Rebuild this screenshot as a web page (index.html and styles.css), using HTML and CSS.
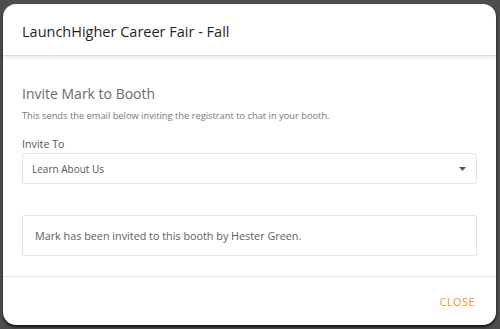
FILE: index.html
```html
<!DOCTYPE html>
<html>
<head>
<meta charset="utf-8">
<link rel="stylesheet" href="styles.css">
</head>
<body>
<div class="backdrop">
  <div class="dialog">
    <div class="header">LaunchHigher Career Fair - Fall</div>
    <div class="body">
      <h2 class="heading">Invite Mark to Booth</h2>
      <p class="sub">This sends the email below inviting the registrant to chat in your booth.</p>
      <label class="label">Invite To</label>
      <div class="select">
        <span>Learn About Us</span>
        <svg class="caret" width="7" height="4" viewBox="0 0 7 4"><path d="M0 0 L7 0 L3.5 4 Z" fill="#555"/></svg>
      </div>
      <div class="note">Mark has been invited to this booth by Hester Green.</div>
    </div>
    <div class="footer">
      <button class="close">CLOSE</button>
    </div>
  </div>
</div>
</body>
</html>
```
FILE: styles.css
```css
html, body {
  margin: 0;
  padding: 0;
  width: 500px;
  height: 329px;
  overflow: hidden;
  background: #4d4d4d;
  font-family: "Open Sans", "Noto Sans", sans-serif;
}
.backdrop {
  padding: 4px 4px 4px 3px;
  height: 329px;
  box-sizing: border-box;
}
.dialog {
  background: #fff;
  border-radius: 13px;
  height: 321px;
  display: flex;
  flex-direction: column;
  overflow: hidden;
  box-shadow: 0 2px 3px rgba(0,0,0,0.8);
}
.header {
  height: 52px;
  flex: none;
  box-sizing: border-box;
  padding: 3px 19px 0 19px;
  display: flex;
  align-items: center;
  font-size: 14.5px;
  color: #1f1f1f;
  border-bottom: 1px solid #dcdcdc;
  box-shadow: 0 2px 4px rgba(0,0,0,0.08);
  position: relative;
  z-index: 1;
}
.body {
  flex: 1;
  padding: 29px 19px 0 19px;
  border-bottom: 1px solid #e6e6e6;
}
.heading {
  margin: 0;
  font-size: 14px;
  font-weight: 400;
  color: #6a6a6a;
  line-height: 18px;
}
.sub {
  margin: 6px 0 0 0;
  font-size: 9.3px;
  color: #777;
  line-height: 14px;
}
.label {
  display: block;
  margin-top: 13px;
  font-size: 10.7px;
  color: #555;
  line-height: 16px;
}
.select {
  margin-top: 1px;
  height: 31px;
  box-sizing: border-box;
  border: 1px solid #e3e3e3;
  border-radius: 3px;
  display: flex;
  align-items: center;
  justify-content: space-between;
  padding: 0 10px 0 9px;
  font-size: 10px;
  color: #555;
}
.caret { margin-top: 1px; }
.note {
  margin-top: 31px;
  height: 41px;
  box-sizing: border-box;
  border: 1px solid #e3e3e3;
  border-radius: 2px;
  display: flex;
  align-items: center;
  padding: 0 12px;
  font-size: 10.8px;
  color: #606060;
}
.footer {
  height: 48px;
  flex: none;
  display: flex;
  align-items: center;
  justify-content: flex-end;
  padding: 0 21px 0 0;
}
.close {
  border: none;
  background: none;
  font-family: inherit;
  font-size: 11px;
  color: #f7941e;
  letter-spacing: 0.4px;
  padding: 0;
  cursor: pointer;
}
```
